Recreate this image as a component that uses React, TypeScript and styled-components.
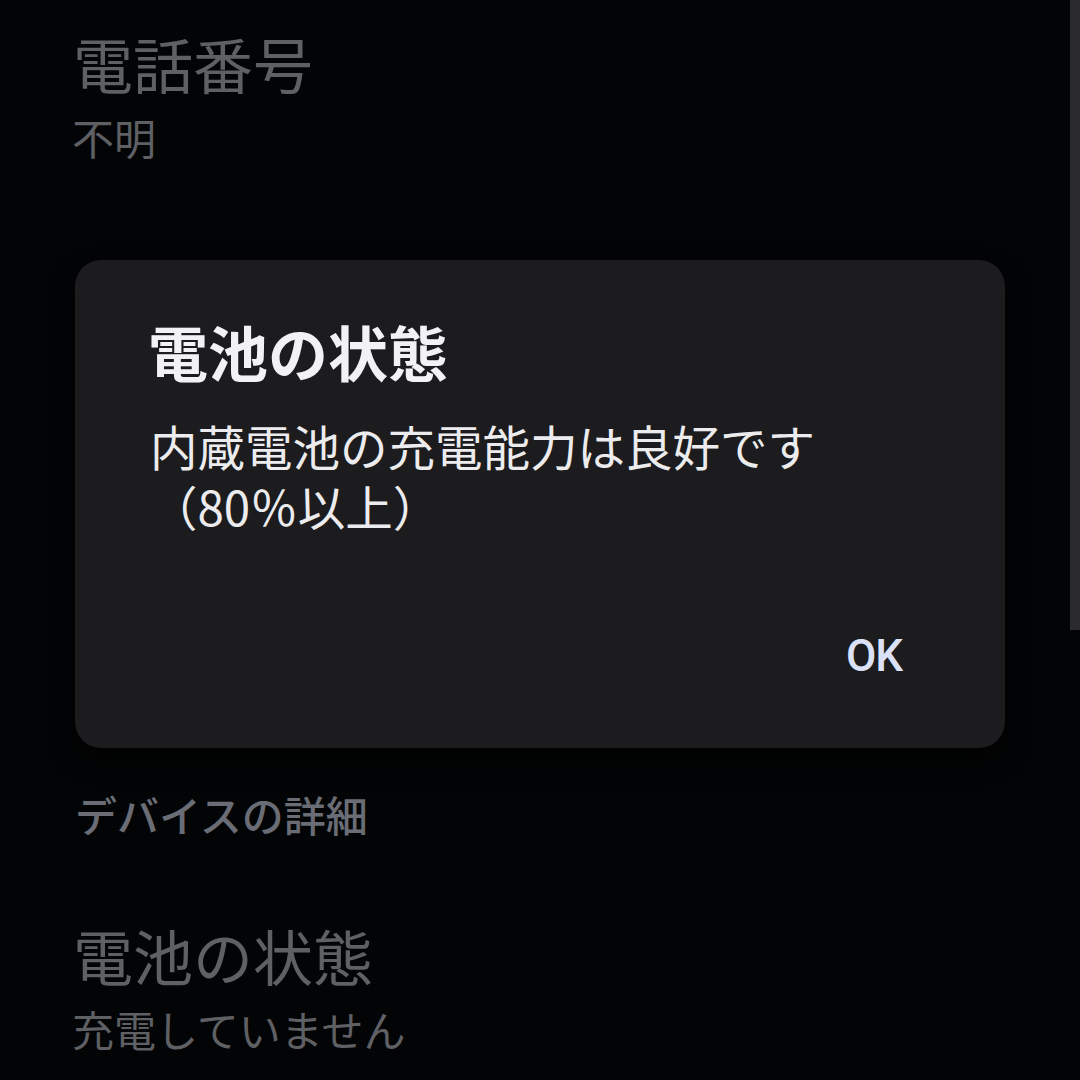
import React from "react";
import styled, { createGlobalStyle } from "styled-components";

const GlobalStyle = createGlobalStyle`
  html, body {
    margin: 0;
    padding: 0;
    background: #030405;
  }
  body {
    font-family: "Noto Sans CJK JP", "Noto Sans", sans-serif;
  }
`;

const Screen = styled.div`
  position: relative;
  width: 1080px;
  height: 1080px;
  overflow: hidden;
  background: #030405;
`;

const List = styled.div`
  display: flex;
  flex-direction: column;
  padding: 27px 0 0 75px;
`;

const Row = styled.div<{ $height?: number }>`
  display: flex;
  flex-direction: column;
  height: ${(p) => (p.$height ? `${p.$height}px` : "auto")};
`;

const RowTitle = styled.div`
  font-size: 60px;
  line-height: 72px;
  color: #5f6064;
  margin-left: -2px;
`;

const RowValue = styled.div`
  margin-top: 13px;
  font-size: 42px;
  line-height: 50px;
  color: #5f6064;
  margin-left: -3px;
`;

const SectionHeader = styled.div`
  font-size: 42px;
  line-height: 60px;
  font-weight: 500;
  color: #6a6d75;
  padding-bottom: 75px;
`;

// scrollbar thumb on the right edge
const ScrollThumb = styled.div`
  position: absolute;
  top: 0;
  right: 0;
  width: 10px;
  height: 630px;
  background: #2b2b2d;
`;

const Dialog = styled.div`
  position: absolute;
  left: 75px;
  top: 260px;
  width: 930px;
  height: 488px;
  box-sizing: border-box;
  border-radius: 26px;
  background: #1c1c1e;
  box-shadow: 0 12px 24px rgba(0, 0, 0, 0.6);
  display: flex;
  flex-direction: column;
  padding: 55px 75px 0 75px;
`;

const DialogTitle = styled.div`
  font-size: 60px;
  line-height: 72px;
  font-weight: 700;
  color: #f2f2f4;
  margin-left: -2px;
`;

const DialogBody = styled.div`
  margin-top: 29px;
  font-size: 47.5px;
  line-height: 60px;
  color: #ececee;
`;

const Actions = styled.div`
  margin-top: auto;
  display: flex;
  justify-content: flex-end;
  padding-bottom: 62px;
`;

const TextButton = styled.button`
  border: none;
  background: none;
  padding: 0 28px;
  font-family: Roboto, "Noto Sans", sans-serif;
  font-size: 44px;
  font-weight: 500;
  line-height: 60px;
  color: #dbe2f8;
  letter-spacing: -1px;
`;

export default function App() {
  return (
    <>
      <GlobalStyle />
      <Screen>
        <List>
          <Row $height={757}>
            <RowTitle>電話番号</RowTitle>
            <RowValue>不明</RowValue>
          </Row>
          <SectionHeader>デバイスの詳細</SectionHeader>
          <Row>
            <RowTitle>電池の状態</RowTitle>
            <RowValue>充電していません</RowValue>
          </Row>
        </List>
        <ScrollThumb />
        <Dialog role="dialog">
          <DialogTitle>電池の状態</DialogTitle>
          <DialogBody>
            内蔵電池の充電能力は良好です
            <br />
            （80％以上）
          </DialogBody>
          <Actions>
            <TextButton>OK</TextButton>
          </Actions>
        </Dialog>
      </Screen>
    </>
  );
}
